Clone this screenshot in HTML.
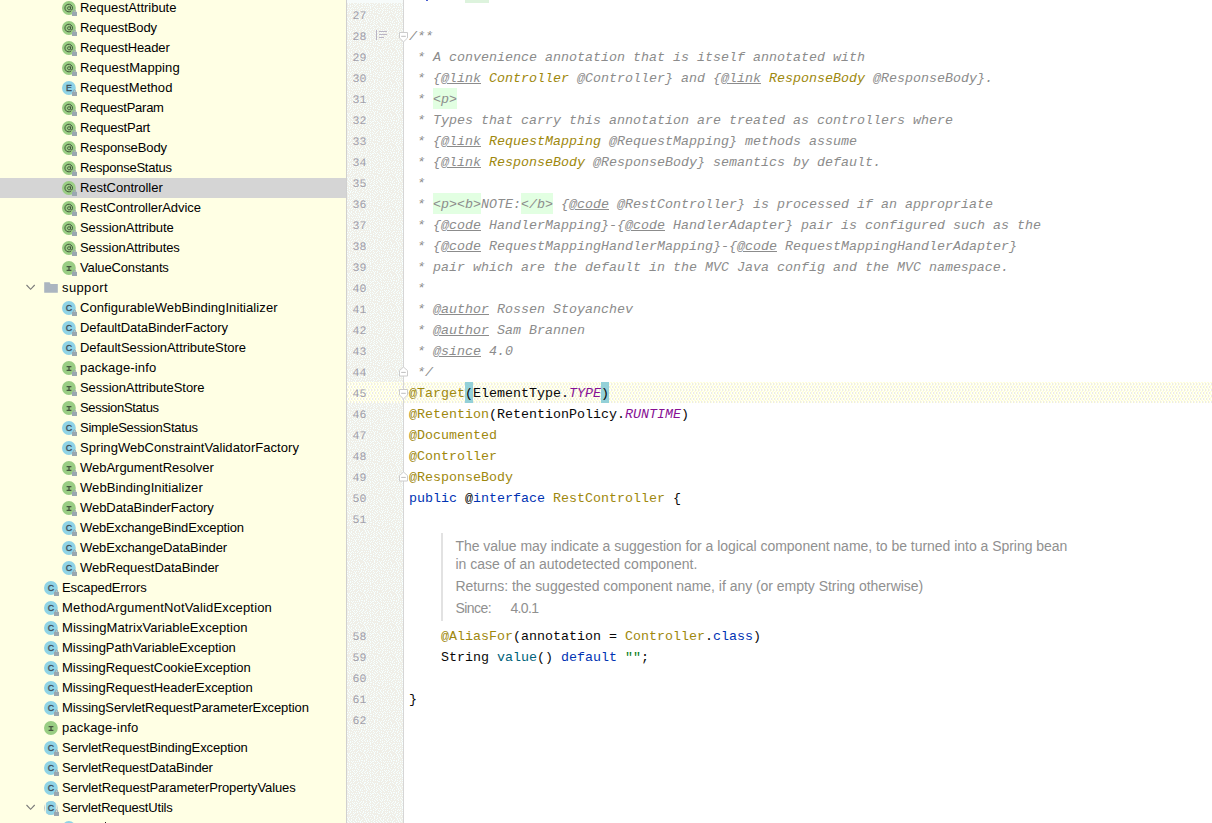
<!DOCTYPE html>
<html><head><meta charset="utf-8"><title>RestController</title>
<style>
html,body{margin:0;padding:0;}
body{width:1212px;height:823px;overflow:hidden;background:#fff;position:relative;font-family:"Liberation Sans",sans-serif;}
#tree{position:absolute;left:0;top:0;width:346px;height:823px;background:#FFFFE4;overflow:hidden;}
.row{position:absolute;left:0;width:346px;height:20px;line-height:20px;font-size:13px;color:#000;white-space:nowrap;}
.row.sel{background:#D5D5D5;}
.row .t{position:absolute;top:0;}
.ic{position:absolute;top:3px;width:16px;height:16px;}
#gut{position:absolute;left:346px;top:0;width:58px;height:823px;background:#F0EFE8;border-left:1px solid #D0D0D0;border-right:1px solid #D4D4D4;box-sizing:border-box;}
.ln{position:absolute;left:352.4px;font-family:"Liberation Mono",monospace;font-size:11.5px;text-rendering:geometricPrecision;letter-spacing:0.1px;line-height:21px;height:21px;color:#A1A0AB;}
#caret{position:absolute;left:347px;top:382px;width:865px;height:21px;background:#FCFAED;}
.cl{position:absolute;left:409px;height:21px;line-height:21px;font-family:"Liberation Mono",monospace;font-size:13.333px;white-space:pre;color:#080808;}
.c{color:#8C8C8C;font-style:italic;}
.u{text-decoration:underline;}
.g{color:#9E880D;}
.k{color:#0033B3;}
.p{color:#871094;font-style:italic;}
.m{color:#00627A;}
.s{color:#067D17;}
.h{position:absolute;height:21px;background:#E2FFE2;}
.b{position:absolute;height:21px;width:8px;background:#93D0D8;}
.doc{position:absolute;left:455px;font-size:14px;line-height:18px;height:18px;color:#909090;white-space:nowrap;}
#bar{position:absolute;left:441px;top:533px;width:2px;height:88px;background:#E2E2E2;}
.fold{position:absolute;left:398px;width:11px;height:12px;}
</style></head>
<body>
<div id="tree">
<div class="row" style="top:-2px"><svg class="ic" style="left:62px" viewBox="0 0 16 16"><circle cx="6.9" cy="7" r="6.9" fill="#99CD83"/><path d="M9.2 9.9 A3.8 3.8 0 1 1 10.5 7 V7.7 Q10.5 8.7 9.5 8.7 Q8.5 8.7 8.5 7.6 V5.4 M8.5 7 A1.5 1.5 0 1 1 8.49 6.95" fill="none" stroke="#42543B" stroke-width="1"/><rect x="10" y="10.8" width="5" height="4.2" fill="#9AA7B0"/><path d="M11.5 10.8 V9.8 a1 1 0 0 1 2 0 V10.8" fill="none" stroke="#9AA7B0" stroke-width="1"/></svg><span class="t" style="left:80px;letter-spacing:-0.028px">RequestAttribute</span></div>
<div class="row" style="top:18px"><svg class="ic" style="left:62px" viewBox="0 0 16 16"><circle cx="6.9" cy="7" r="6.9" fill="#99CD83"/><path d="M9.2 9.9 A3.8 3.8 0 1 1 10.5 7 V7.7 Q10.5 8.7 9.5 8.7 Q8.5 8.7 8.5 7.6 V5.4 M8.5 7 A1.5 1.5 0 1 1 8.49 6.95" fill="none" stroke="#42543B" stroke-width="1"/><rect x="10" y="10.8" width="5" height="4.2" fill="#9AA7B0"/><path d="M11.5 10.8 V9.8 a1 1 0 0 1 2 0 V10.8" fill="none" stroke="#9AA7B0" stroke-width="1"/></svg><span class="t" style="left:80px;letter-spacing:-0.097px">RequestBody</span></div>
<div class="row" style="top:38px"><svg class="ic" style="left:62px" viewBox="0 0 16 16"><circle cx="6.9" cy="7" r="6.9" fill="#99CD83"/><path d="M9.2 9.9 A3.8 3.8 0 1 1 10.5 7 V7.7 Q10.5 8.7 9.5 8.7 Q8.5 8.7 8.5 7.6 V5.4 M8.5 7 A1.5 1.5 0 1 1 8.49 6.95" fill="none" stroke="#42543B" stroke-width="1"/><rect x="10" y="10.8" width="5" height="4.2" fill="#9AA7B0"/><path d="M11.5 10.8 V9.8 a1 1 0 0 1 2 0 V10.8" fill="none" stroke="#9AA7B0" stroke-width="1"/></svg><span class="t" style="left:80px;letter-spacing:-0.105px">RequestHeader</span></div>
<div class="row" style="top:58px"><svg class="ic" style="left:62px" viewBox="0 0 16 16"><circle cx="6.9" cy="7" r="6.9" fill="#99CD83"/><path d="M9.2 9.9 A3.8 3.8 0 1 1 10.5 7 V7.7 Q10.5 8.7 9.5 8.7 Q8.5 8.7 8.5 7.6 V5.4 M8.5 7 A1.5 1.5 0 1 1 8.49 6.95" fill="none" stroke="#42543B" stroke-width="1"/><rect x="10" y="10.8" width="5" height="4.2" fill="#9AA7B0"/><path d="M11.5 10.8 V9.8 a1 1 0 0 1 2 0 V10.8" fill="none" stroke="#9AA7B0" stroke-width="1"/></svg><span class="t" style="left:80px;letter-spacing:0.107px">RequestMapping</span></div>
<div class="row" style="top:78px"><svg class="ic" style="left:62px" viewBox="0 0 16 16"><circle cx="6.9" cy="7" r="6.9" fill="#8FD3E6"/><text x="6.9" y="9.8" text-anchor="middle" font-family="Liberation Sans" font-size="8.8" fill="#3E5058" stroke="#3E5058" stroke-width="0.35">E</text><rect x="10" y="10.8" width="5" height="4.2" fill="#9AA7B0"/><path d="M11.5 10.8 V9.8 a1 1 0 0 1 2 0 V10.8" fill="none" stroke="#9AA7B0" stroke-width="1"/></svg><span class="t" style="left:80px;letter-spacing:0.048px">RequestMethod</span></div>
<div class="row" style="top:98px"><svg class="ic" style="left:62px" viewBox="0 0 16 16"><circle cx="6.9" cy="7" r="6.9" fill="#99CD83"/><path d="M9.2 9.9 A3.8 3.8 0 1 1 10.5 7 V7.7 Q10.5 8.7 9.5 8.7 Q8.5 8.7 8.5 7.6 V5.4 M8.5 7 A1.5 1.5 0 1 1 8.49 6.95" fill="none" stroke="#42543B" stroke-width="1"/><rect x="10" y="10.8" width="5" height="4.2" fill="#9AA7B0"/><path d="M11.5 10.8 V9.8 a1 1 0 0 1 2 0 V10.8" fill="none" stroke="#9AA7B0" stroke-width="1"/></svg><span class="t" style="left:80px;letter-spacing:-0.252px">RequestParam</span></div>
<div class="row" style="top:118px"><svg class="ic" style="left:62px" viewBox="0 0 16 16"><circle cx="6.9" cy="7" r="6.9" fill="#99CD83"/><path d="M9.2 9.9 A3.8 3.8 0 1 1 10.5 7 V7.7 Q10.5 8.7 9.5 8.7 Q8.5 8.7 8.5 7.6 V5.4 M8.5 7 A1.5 1.5 0 1 1 8.49 6.95" fill="none" stroke="#42543B" stroke-width="1"/><rect x="10" y="10.8" width="5" height="4.2" fill="#9AA7B0"/><path d="M11.5 10.8 V9.8 a1 1 0 0 1 2 0 V10.8" fill="none" stroke="#9AA7B0" stroke-width="1"/></svg><span class="t" style="left:80px;letter-spacing:-0.206px">RequestPart</span></div>
<div class="row" style="top:138px"><svg class="ic" style="left:62px" viewBox="0 0 16 16"><circle cx="6.9" cy="7" r="6.9" fill="#99CD83"/><path d="M9.2 9.9 A3.8 3.8 0 1 1 10.5 7 V7.7 Q10.5 8.7 9.5 8.7 Q8.5 8.7 8.5 7.6 V5.4 M8.5 7 A1.5 1.5 0 1 1 8.49 6.95" fill="none" stroke="#42543B" stroke-width="1"/><rect x="10" y="10.8" width="5" height="4.2" fill="#9AA7B0"/><path d="M11.5 10.8 V9.8 a1 1 0 0 1 2 0 V10.8" fill="none" stroke="#9AA7B0" stroke-width="1"/></svg><span class="t" style="left:80px;letter-spacing:-0.098px">ResponseBody</span></div>
<div class="row" style="top:158px"><svg class="ic" style="left:62px" viewBox="0 0 16 16"><circle cx="6.9" cy="7" r="6.9" fill="#99CD83"/><path d="M9.2 9.9 A3.8 3.8 0 1 1 10.5 7 V7.7 Q10.5 8.7 9.5 8.7 Q8.5 8.7 8.5 7.6 V5.4 M8.5 7 A1.5 1.5 0 1 1 8.49 6.95" fill="none" stroke="#42543B" stroke-width="1"/><rect x="10" y="10.8" width="5" height="4.2" fill="#9AA7B0"/><path d="M11.5 10.8 V9.8 a1 1 0 0 1 2 0 V10.8" fill="none" stroke="#9AA7B0" stroke-width="1"/></svg><span class="t" style="left:80px;letter-spacing:-0.265px">ResponseStatus</span></div>
<div class="row sel" style="top:178px"><svg class="ic" style="left:62px" viewBox="0 0 16 16"><circle cx="6.9" cy="7" r="6.9" fill="#99CD83"/><path d="M9.2 9.9 A3.8 3.8 0 1 1 10.5 7 V7.7 Q10.5 8.7 9.5 8.7 Q8.5 8.7 8.5 7.6 V5.4 M8.5 7 A1.5 1.5 0 1 1 8.49 6.95" fill="none" stroke="#42543B" stroke-width="1"/><rect x="10" y="10.8" width="5" height="4.2" fill="#9AA7B0"/><path d="M11.5 10.8 V9.8 a1 1 0 0 1 2 0 V10.8" fill="none" stroke="#9AA7B0" stroke-width="1"/></svg><span class="t" style="left:80px;letter-spacing:-0.028px">RestController</span></div>
<div class="row" style="top:198px"><svg class="ic" style="left:62px" viewBox="0 0 16 16"><circle cx="6.9" cy="7" r="6.9" fill="#99CD83"/><path d="M9.2 9.9 A3.8 3.8 0 1 1 10.5 7 V7.7 Q10.5 8.7 9.5 8.7 Q8.5 8.7 8.5 7.6 V5.4 M8.5 7 A1.5 1.5 0 1 1 8.49 6.95" fill="none" stroke="#42543B" stroke-width="1"/><rect x="10" y="10.8" width="5" height="4.2" fill="#9AA7B0"/><path d="M11.5 10.8 V9.8 a1 1 0 0 1 2 0 V10.8" fill="none" stroke="#9AA7B0" stroke-width="1"/></svg><span class="t" style="left:80px;letter-spacing:-0.065px">RestControllerAdvice</span></div>
<div class="row" style="top:218px"><svg class="ic" style="left:62px" viewBox="0 0 16 16"><circle cx="6.9" cy="7" r="6.9" fill="#99CD83"/><path d="M9.2 9.9 A3.8 3.8 0 1 1 10.5 7 V7.7 Q10.5 8.7 9.5 8.7 Q8.5 8.7 8.5 7.6 V5.4 M8.5 7 A1.5 1.5 0 1 1 8.49 6.95" fill="none" stroke="#42543B" stroke-width="1"/><rect x="10" y="10.8" width="5" height="4.2" fill="#9AA7B0"/><path d="M11.5 10.8 V9.8 a1 1 0 0 1 2 0 V10.8" fill="none" stroke="#9AA7B0" stroke-width="1"/></svg><span class="t" style="left:80px;letter-spacing:-0.061px">SessionAttribute</span></div>
<div class="row" style="top:238px"><svg class="ic" style="left:62px" viewBox="0 0 16 16"><circle cx="6.9" cy="7" r="6.9" fill="#99CD83"/><path d="M9.2 9.9 A3.8 3.8 0 1 1 10.5 7 V7.7 Q10.5 8.7 9.5 8.7 Q8.5 8.7 8.5 7.6 V5.4 M8.5 7 A1.5 1.5 0 1 1 8.49 6.95" fill="none" stroke="#42543B" stroke-width="1"/><rect x="10" y="10.8" width="5" height="4.2" fill="#9AA7B0"/><path d="M11.5 10.8 V9.8 a1 1 0 0 1 2 0 V10.8" fill="none" stroke="#9AA7B0" stroke-width="1"/></svg><span class="t" style="left:80px;letter-spacing:-0.081px">SessionAttributes</span></div>
<div class="row" style="top:258px"><svg class="ic" style="left:62px" viewBox="0 0 16 16"><circle cx="6.9" cy="7" r="6.9" fill="#99CD83"/><path d="M4.6 5.7 H9.4 M4.6 9.4 H9.4 M7 5.7 V9.4" stroke="#45543F" stroke-width="1.3" fill="none"/><rect x="10" y="10.8" width="5" height="4.2" fill="#9AA7B0"/><path d="M11.5 10.8 V9.8 a1 1 0 0 1 2 0 V10.8" fill="none" stroke="#9AA7B0" stroke-width="1"/></svg><span class="t" style="left:80px;letter-spacing:-0.152px">ValueConstants</span></div>
<div class="row" style="top:278px"><svg class="ic" style="left:26px" viewBox="0 0 16 16"><path d="M0.5 4 L4.6 8.3 L8.7 4" fill="none" stroke="#7A7A7A" stroke-width="1.1"/></svg><svg class="ic" style="left:44px" viewBox="0 0 16 16"><path d="M0.2 1.3 H5.6 L6.6 3 H13.8 V11.8 H0.2 Z" fill="#ABB5C0"/></svg><span class="t" style="left:62px;letter-spacing:0.375px">support</span></div>
<div class="row" style="top:298px"><svg class="ic" style="left:62px" viewBox="0 0 16 16"><circle cx="6.9" cy="7" r="6.9" fill="#8FD3E6"/><text x="6.9" y="9.8" text-anchor="middle" font-family="Liberation Sans" font-size="8.8" fill="#3E5058" stroke="#3E5058" stroke-width="0.35">C</text><rect x="10" y="10.8" width="5" height="4.2" fill="#9AA7B0"/><path d="M11.5 10.8 V9.8 a1 1 0 0 1 2 0 V10.8" fill="none" stroke="#9AA7B0" stroke-width="1"/></svg><span class="t" style="left:80px;letter-spacing:0.083px">ConfigurableWebBindingInitializer</span></div>
<div class="row" style="top:318px"><svg class="ic" style="left:62px" viewBox="0 0 16 16"><circle cx="6.9" cy="7" r="6.9" fill="#8FD3E6"/><text x="6.9" y="9.8" text-anchor="middle" font-family="Liberation Sans" font-size="8.8" fill="#3E5058" stroke="#3E5058" stroke-width="0.35">C</text><rect x="10" y="10.8" width="5" height="4.2" fill="#9AA7B0"/><path d="M11.5 10.8 V9.8 a1 1 0 0 1 2 0 V10.8" fill="none" stroke="#9AA7B0" stroke-width="1"/></svg><span class="t" style="left:80px;letter-spacing:-0.070px">DefaultDataBinderFactory</span></div>
<div class="row" style="top:338px"><svg class="ic" style="left:62px" viewBox="0 0 16 16"><circle cx="6.9" cy="7" r="6.9" fill="#8FD3E6"/><text x="6.9" y="9.8" text-anchor="middle" font-family="Liberation Sans" font-size="8.8" fill="#3E5058" stroke="#3E5058" stroke-width="0.35">C</text><rect x="10" y="10.8" width="5" height="4.2" fill="#9AA7B0"/><path d="M11.5 10.8 V9.8 a1 1 0 0 1 2 0 V10.8" fill="none" stroke="#9AA7B0" stroke-width="1"/></svg><span class="t" style="left:80px;letter-spacing:-0.037px">DefaultSessionAttributeStore</span></div>
<div class="row" style="top:358px"><svg class="ic" style="left:62px" viewBox="0 0 16 16"><circle cx="6.9" cy="7" r="6.9" fill="#99CD83"/><path d="M4.6 5.7 H9.4 M4.6 9.4 H9.4 M7 5.7 V9.4" stroke="#45543F" stroke-width="1.3" fill="none"/><rect x="10" y="10.8" width="5" height="4.2" fill="#9AA7B0"/><path d="M11.5 10.8 V9.8 a1 1 0 0 1 2 0 V10.8" fill="none" stroke="#9AA7B0" stroke-width="1"/></svg><span class="t" style="left:80px;letter-spacing:0.162px">package-info</span></div>
<div class="row" style="top:378px"><svg class="ic" style="left:62px" viewBox="0 0 16 16"><circle cx="6.9" cy="7" r="6.9" fill="#99CD83"/><path d="M4.6 5.7 H9.4 M4.6 9.4 H9.4 M7 5.7 V9.4" stroke="#45543F" stroke-width="1.3" fill="none"/><rect x="10" y="10.8" width="5" height="4.2" fill="#9AA7B0"/><path d="M11.5 10.8 V9.8 a1 1 0 0 1 2 0 V10.8" fill="none" stroke="#9AA7B0" stroke-width="1"/></svg><span class="t" style="left:80px;letter-spacing:-0.059px">SessionAttributeStore</span></div>
<div class="row" style="top:398px"><svg class="ic" style="left:62px" viewBox="0 0 16 16"><circle cx="6.9" cy="7" r="6.9" fill="#99CD83"/><path d="M4.6 5.7 H9.4 M4.6 9.4 H9.4 M7 5.7 V9.4" stroke="#45543F" stroke-width="1.3" fill="none"/><rect x="10" y="10.8" width="5" height="4.2" fill="#9AA7B0"/><path d="M11.5 10.8 V9.8 a1 1 0 0 1 2 0 V10.8" fill="none" stroke="#9AA7B0" stroke-width="1"/></svg><span class="t" style="left:80px;letter-spacing:-0.339px">SessionStatus</span></div>
<div class="row" style="top:418px"><svg class="ic" style="left:62px" viewBox="0 0 16 16"><circle cx="6.9" cy="7" r="6.9" fill="#8FD3E6"/><text x="6.9" y="9.8" text-anchor="middle" font-family="Liberation Sans" font-size="8.8" fill="#3E5058" stroke="#3E5058" stroke-width="0.35">C</text><rect x="10" y="10.8" width="5" height="4.2" fill="#9AA7B0"/><path d="M11.5 10.8 V9.8 a1 1 0 0 1 2 0 V10.8" fill="none" stroke="#9AA7B0" stroke-width="1"/></svg><span class="t" style="left:80px;letter-spacing:-0.265px">SimpleSessionStatus</span></div>
<div class="row" style="top:438px"><svg class="ic" style="left:62px" viewBox="0 0 16 16"><circle cx="6.9" cy="7" r="6.9" fill="#8FD3E6"/><text x="6.9" y="9.8" text-anchor="middle" font-family="Liberation Sans" font-size="8.8" fill="#3E5058" stroke="#3E5058" stroke-width="0.35">C</text><rect x="10" y="10.8" width="5" height="4.2" fill="#9AA7B0"/><path d="M11.5 10.8 V9.8 a1 1 0 0 1 2 0 V10.8" fill="none" stroke="#9AA7B0" stroke-width="1"/></svg><span class="t" style="left:80px;letter-spacing:0.057px">SpringWebConstraintValidatorFactory</span></div>
<div class="row" style="top:458px"><svg class="ic" style="left:62px" viewBox="0 0 16 16"><circle cx="6.9" cy="7" r="6.9" fill="#99CD83"/><path d="M4.6 5.7 H9.4 M4.6 9.4 H9.4 M7 5.7 V9.4" stroke="#45543F" stroke-width="1.3" fill="none"/><rect x="10" y="10.8" width="5" height="4.2" fill="#9AA7B0"/><path d="M11.5 10.8 V9.8 a1 1 0 0 1 2 0 V10.8" fill="none" stroke="#9AA7B0" stroke-width="1"/></svg><span class="t" style="left:80px;letter-spacing:-0.019px">WebArgumentResolver</span></div>
<div class="row" style="top:478px"><svg class="ic" style="left:62px" viewBox="0 0 16 16"><circle cx="6.9" cy="7" r="6.9" fill="#99CD83"/><path d="M4.6 5.7 H9.4 M4.6 9.4 H9.4 M7 5.7 V9.4" stroke="#45543F" stroke-width="1.3" fill="none"/><rect x="10" y="10.8" width="5" height="4.2" fill="#9AA7B0"/><path d="M11.5 10.8 V9.8 a1 1 0 0 1 2 0 V10.8" fill="none" stroke="#9AA7B0" stroke-width="1"/></svg><span class="t" style="left:80px;letter-spacing:0.078px">WebBindingInitializer</span></div>
<div class="row" style="top:498px"><svg class="ic" style="left:62px" viewBox="0 0 16 16"><circle cx="6.9" cy="7" r="6.9" fill="#99CD83"/><path d="M4.6 5.7 H9.4 M4.6 9.4 H9.4 M7 5.7 V9.4" stroke="#45543F" stroke-width="1.3" fill="none"/><rect x="10" y="10.8" width="5" height="4.2" fill="#9AA7B0"/><path d="M11.5 10.8 V9.8 a1 1 0 0 1 2 0 V10.8" fill="none" stroke="#9AA7B0" stroke-width="1"/></svg><span class="t" style="left:80px;letter-spacing:-0.054px">WebDataBinderFactory</span></div>
<div class="row" style="top:518px"><svg class="ic" style="left:62px" viewBox="0 0 16 16"><circle cx="6.9" cy="7" r="6.9" fill="#8FD3E6"/><text x="6.9" y="9.8" text-anchor="middle" font-family="Liberation Sans" font-size="8.8" fill="#3E5058" stroke="#3E5058" stroke-width="0.35">C</text><rect x="10" y="10.8" width="5" height="4.2" fill="#9AA7B0"/><path d="M11.5 10.8 V9.8 a1 1 0 0 1 2 0 V10.8" fill="none" stroke="#9AA7B0" stroke-width="1"/></svg><span class="t" style="left:80px;letter-spacing:-0.147px">WebExchangeBindException</span></div>
<div class="row" style="top:538px"><svg class="ic" style="left:62px" viewBox="0 0 16 16"><circle cx="6.9" cy="7" r="6.9" fill="#8FD3E6"/><text x="6.9" y="9.8" text-anchor="middle" font-family="Liberation Sans" font-size="8.8" fill="#3E5058" stroke="#3E5058" stroke-width="0.35">C</text><rect x="10" y="10.8" width="5" height="4.2" fill="#9AA7B0"/><path d="M11.5 10.8 V9.8 a1 1 0 0 1 2 0 V10.8" fill="none" stroke="#9AA7B0" stroke-width="1"/></svg><span class="t" style="left:80px;letter-spacing:-0.112px">WebExchangeDataBinder</span></div>
<div class="row" style="top:558px"><svg class="ic" style="left:62px" viewBox="0 0 16 16"><circle cx="6.9" cy="7" r="6.9" fill="#8FD3E6"/><text x="6.9" y="9.8" text-anchor="middle" font-family="Liberation Sans" font-size="8.8" fill="#3E5058" stroke="#3E5058" stroke-width="0.35">C</text><rect x="10" y="10.8" width="5" height="4.2" fill="#9AA7B0"/><path d="M11.5 10.8 V9.8 a1 1 0 0 1 2 0 V10.8" fill="none" stroke="#9AA7B0" stroke-width="1"/></svg><span class="t" style="left:80px;letter-spacing:-0.053px">WebRequestDataBinder</span></div>
<div class="row" style="top:578px"><svg class="ic" style="left:44px" viewBox="0 0 16 16"><circle cx="6.9" cy="7" r="6.9" fill="#8FD3E6"/><text x="6.9" y="9.8" text-anchor="middle" font-family="Liberation Sans" font-size="8.8" fill="#3E5058" stroke="#3E5058" stroke-width="0.35">C</text><rect x="10" y="10.8" width="5" height="4.2" fill="#9AA7B0"/><path d="M11.5 10.8 V9.8 a1 1 0 0 1 2 0 V10.8" fill="none" stroke="#9AA7B0" stroke-width="1"/></svg><span class="t" style="left:62px;letter-spacing:-0.106px">EscapedErrors</span></div>
<div class="row" style="top:598px"><svg class="ic" style="left:44px" viewBox="0 0 16 16"><circle cx="6.9" cy="7" r="6.9" fill="#8FD3E6"/><text x="6.9" y="9.8" text-anchor="middle" font-family="Liberation Sans" font-size="8.8" fill="#3E5058" stroke="#3E5058" stroke-width="0.35">C</text><rect x="10" y="10.8" width="5" height="4.2" fill="#9AA7B0"/><path d="M11.5 10.8 V9.8 a1 1 0 0 1 2 0 V10.8" fill="none" stroke="#9AA7B0" stroke-width="1"/></svg><span class="t" style="left:62px;letter-spacing:0.161px">MethodArgumentNotValidException</span></div>
<div class="row" style="top:618px"><svg class="ic" style="left:44px" viewBox="0 0 16 16"><circle cx="6.9" cy="7" r="6.9" fill="#8FD3E6"/><text x="6.9" y="9.8" text-anchor="middle" font-family="Liberation Sans" font-size="8.8" fill="#3E5058" stroke="#3E5058" stroke-width="0.35">C</text><rect x="10" y="10.8" width="5" height="4.2" fill="#9AA7B0"/><path d="M11.5 10.8 V9.8 a1 1 0 0 1 2 0 V10.8" fill="none" stroke="#9AA7B0" stroke-width="1"/></svg><span class="t" style="left:62px;letter-spacing:0.077px">MissingMatrixVariableException</span></div>
<div class="row" style="top:638px"><svg class="ic" style="left:44px" viewBox="0 0 16 16"><circle cx="6.9" cy="7" r="6.9" fill="#8FD3E6"/><text x="6.9" y="9.8" text-anchor="middle" font-family="Liberation Sans" font-size="8.8" fill="#3E5058" stroke="#3E5058" stroke-width="0.35">C</text><rect x="10" y="10.8" width="5" height="4.2" fill="#9AA7B0"/><path d="M11.5 10.8 V9.8 a1 1 0 0 1 2 0 V10.8" fill="none" stroke="#9AA7B0" stroke-width="1"/></svg><span class="t" style="left:62px;letter-spacing:-0.030px">MissingPathVariableException</span></div>
<div class="row" style="top:658px"><svg class="ic" style="left:44px" viewBox="0 0 16 16"><circle cx="6.9" cy="7" r="6.9" fill="#8FD3E6"/><text x="6.9" y="9.8" text-anchor="middle" font-family="Liberation Sans" font-size="8.8" fill="#3E5058" stroke="#3E5058" stroke-width="0.35">C</text><rect x="10" y="10.8" width="5" height="4.2" fill="#9AA7B0"/><path d="M11.5 10.8 V9.8 a1 1 0 0 1 2 0 V10.8" fill="none" stroke="#9AA7B0" stroke-width="1"/></svg><span class="t" style="left:62px;letter-spacing:-0.046px">MissingRequestCookieException</span></div>
<div class="row" style="top:678px"><svg class="ic" style="left:44px" viewBox="0 0 16 16"><circle cx="6.9" cy="7" r="6.9" fill="#8FD3E6"/><text x="6.9" y="9.8" text-anchor="middle" font-family="Liberation Sans" font-size="8.8" fill="#3E5058" stroke="#3E5058" stroke-width="0.35">C</text><rect x="10" y="10.8" width="5" height="4.2" fill="#9AA7B0"/><path d="M11.5 10.8 V9.8 a1 1 0 0 1 2 0 V10.8" fill="none" stroke="#9AA7B0" stroke-width="1"/></svg><span class="t" style="left:62px;letter-spacing:-0.052px">MissingRequestHeaderException</span></div>
<div class="row" style="top:698px"><svg class="ic" style="left:44px" viewBox="0 0 16 16"><circle cx="6.9" cy="7" r="6.9" fill="#8FD3E6"/><text x="6.9" y="9.8" text-anchor="middle" font-family="Liberation Sans" font-size="8.8" fill="#3E5058" stroke="#3E5058" stroke-width="0.35">C</text><rect x="10" y="10.8" width="5" height="4.2" fill="#9AA7B0"/><path d="M11.5 10.8 V9.8 a1 1 0 0 1 2 0 V10.8" fill="none" stroke="#9AA7B0" stroke-width="1"/></svg><span class="t" style="left:62px;letter-spacing:-0.101px">MissingServletRequestParameterException</span></div>
<div class="row" style="top:718px"><svg class="ic" style="left:44px" viewBox="0 0 16 16"><circle cx="6.9" cy="7" r="6.9" fill="#99CD83"/><path d="M4.6 5.7 H9.4 M4.6 9.4 H9.4 M7 5.7 V9.4" stroke="#45543F" stroke-width="1.3" fill="none"/></svg><span class="t" style="left:62px;letter-spacing:0.171px">package-info</span></div>
<div class="row" style="top:738px"><svg class="ic" style="left:44px" viewBox="0 0 16 16"><circle cx="6.9" cy="7" r="6.9" fill="#8FD3E6"/><text x="6.9" y="9.8" text-anchor="middle" font-family="Liberation Sans" font-size="8.8" fill="#3E5058" stroke="#3E5058" stroke-width="0.35">C</text><rect x="10" y="10.8" width="5" height="4.2" fill="#9AA7B0"/><path d="M11.5 10.8 V9.8 a1 1 0 0 1 2 0 V10.8" fill="none" stroke="#9AA7B0" stroke-width="1"/></svg><span class="t" style="left:62px;letter-spacing:-0.125px">ServletRequestBindingException</span></div>
<div class="row" style="top:758px"><svg class="ic" style="left:44px" viewBox="0 0 16 16"><circle cx="6.9" cy="7" r="6.9" fill="#8FD3E6"/><text x="6.9" y="9.8" text-anchor="middle" font-family="Liberation Sans" font-size="8.8" fill="#3E5058" stroke="#3E5058" stroke-width="0.35">C</text><rect x="10" y="10.8" width="5" height="4.2" fill="#9AA7B0"/><path d="M11.5 10.8 V9.8 a1 1 0 0 1 2 0 V10.8" fill="none" stroke="#9AA7B0" stroke-width="1"/></svg><span class="t" style="left:62px;letter-spacing:-0.130px">ServletRequestDataBinder</span></div>
<div class="row" style="top:778px"><svg class="ic" style="left:44px" viewBox="0 0 16 16"><circle cx="6.9" cy="7" r="6.9" fill="#8FD3E6"/><text x="6.9" y="9.8" text-anchor="middle" font-family="Liberation Sans" font-size="8.8" fill="#3E5058" stroke="#3E5058" stroke-width="0.35">C</text><rect x="10" y="10.8" width="5" height="4.2" fill="#9AA7B0"/><path d="M11.5 10.8 V9.8 a1 1 0 0 1 2 0 V10.8" fill="none" stroke="#9AA7B0" stroke-width="1"/></svg><span class="t" style="left:62px;letter-spacing:-0.105px">ServletRequestParameterPropertyValues</span></div>
<div class="row" style="top:798px"><svg class="ic" style="left:26px" viewBox="0 0 16 16"><path d="M0.5 4 L4.6 8.3 L8.7 4" fill="none" stroke="#7A7A7A" stroke-width="1.1"/></svg><svg class="ic" style="left:44px" viewBox="0 0 16 16"><circle cx="6.9" cy="7" r="6.9" fill="#B7C6CB"/><rect x="1.2" y="0" width="1" height="14" fill="#FFFFE4"/><rect x="11.6" y="0" width="1" height="14" fill="#FFFFE4"/><path d="M2.2 1.9 A6.9 6.9 0 0 1 11.6 1.9 V12.1 A6.9 6.9 0 0 1 2.2 12.1 Z" fill="#8FD3E6"/><text x="6.9" y="9.8" text-anchor="middle" font-family="Liberation Sans" font-size="8.8" fill="#3E5058" stroke="#3E5058" stroke-width="0.35">C</text><rect x="10" y="10.8" width="5" height="4.2" fill="#9AA7B0"/><path d="M11.5 10.8 V9.8 a1 1 0 0 1 2 0 V10.8" fill="none" stroke="#9AA7B0" stroke-width="1"/></svg><span class="t" style="left:62px;letter-spacing:-0.187px">ServletRequestUtils</span></div>
<div class="row" style="top:818px"><svg class="ic" style="left:62px" viewBox="0 0 16 16"><circle cx="6.9" cy="7" r="6.9" fill="#8FD3E6"/><text x="6.9" y="9.8" text-anchor="middle" font-family="Liberation Sans" font-size="8.8" fill="#3E5058" stroke="#3E5058" stroke-width="0.35">C</text><rect x="10" y="10.8" width="5" height="4.2" fill="#9AA7B0"/><path d="M11.5 10.8 V9.8 a1 1 0 0 1 2 0 V10.8" fill="none" stroke="#9AA7B0" stroke-width="1"/></svg></div>
</div>
<div id="gut"></div>
<svg style="position:absolute;left:347px;top:0;width:56px;height:823px" width="56" height="823"><defs><pattern id="dz" width="32" height="32" patternUnits="userSpaceOnUse"><path d="M1 0.5h1M3 0.5h1M5 0.5h1M8 0.5h1M10 0.5h1M19 0.5h1M22 0.5h1M27 0.5h1M30 0.5h1M28 1.5h1M25 1.5h1M23 1.5h1M16 1.5h1M14 1.5h1M11 1.5h1M2 1.5h1M5 2.5h1M7 2.5h1M9 2.5h1M13 2.5h1M16 2.5h1M19 2.5h1M23 2.5h1M26 2.5h1M31 2.5h1M30 3.5h1M27 3.5h1M22 3.5h1M18 3.5h1M15 3.5h1M12 3.5h1M10 3.5h1M6 3.5h1M3 3.5h1M1 3.5h1M1 4.5h1M7 4.5h1M9 4.5h1M14 4.5h1M17 4.5h1M20 4.5h1M23 4.5h1M25 4.5h1M29 4.5h1M28 5.5h1M26 5.5h1M22 5.5h1M20 5.5h1M18 5.5h1M15 5.5h1M12 5.5h1M8 5.5h1M5 5.5h1M3 5.5h1M1 6.5h1M3 6.5h1M7 6.5h1M10 6.5h1M23 6.5h1M25 6.5h1M30 6.5h1M27 7.5h1M23 7.5h1M21 7.5h1M19 7.5h1M17 7.5h1M15 7.5h1M14 7.5h1M11 7.5h1M5 7.5h1M0 8.5h1M2 8.5h1M4 8.5h1M6 8.5h1M8 8.5h1M10 8.5h1M13 8.5h1M23 8.5h1M28 8.5h1M30 8.5h1M29 9.5h1M26 9.5h1M21 9.5h1M19 9.5h1M16 9.5h1M12 9.5h1M3 9.5h1M1 10.5h1M4 10.5h1M6 10.5h1M8 10.5h1M14 10.5h1M18 10.5h1M20 10.5h1M23 10.5h1M24 10.5h1M28 10.5h1M31 10.5h1M26 11.5h1M16 11.5h1M12 11.5h1M10 11.5h1M3 11.5h1M0 11.5h1M3 12.5h1M6 12.5h1M8 12.5h1M10 12.5h1M13 12.5h1M16 12.5h1M18 12.5h1M21 12.5h1M23 12.5h1M26 12.5h1M28 12.5h1M30 12.5h1M31 13.5h1M20 13.5h1M15 13.5h1M7 13.5h1M2 13.5h1M0 13.5h1M4 14.5h1M6 14.5h1M11 14.5h1M13 14.5h1M17 14.5h1M18 14.5h1M21 14.5h1M23 14.5h1M25 14.5h1M30 15.5h1M28 15.5h1M26 15.5h1M20 15.5h1M17 15.5h1M14 15.5h1M10 15.5h1M3 15.5h1M5 16.5h1M7 16.5h1M9 16.5h1M16 16.5h1M19 16.5h1M22 16.5h1M24 16.5h1M27 16.5h1M30 16.5h1M27 17.5h1M17 17.5h1M11 17.5h1M4 17.5h1M2 17.5h1M0 17.5h1M1 18.5h1M6 18.5h1M9 18.5h1M12 18.5h1M18 18.5h1M20 18.5h1M23 18.5h1M27 18.5h1M30 18.5h1M29 19.5h1M25 19.5h1M21 19.5h1M18 19.5h1M15 19.5h1M12 19.5h1M8 19.5h1M4 19.5h1M1 19.5h1M2 20.5h1M4 20.5h1M8 20.5h1M14 20.5h1M19 20.5h1M21 20.5h1M24 20.5h1M27 20.5h1M31 20.5h1M29 21.5h1M26 21.5h1M22 21.5h1M19 21.5h1M17 21.5h1M13 21.5h1M11 21.5h1M9 21.5h1M6 21.5h1M3 21.5h1M0 21.5h1M1 22.5h1M4 22.5h1M7 22.5h1M13 22.5h1M15 22.5h1M20 22.5h1M24 22.5h1M27 22.5h1M30 22.5h1M29 23.5h1M26 23.5h1M23 23.5h1M19 23.5h1M11 23.5h1M9 23.5h1M5 23.5h1M2 23.5h1M1 24.5h1M12 24.5h1M14 24.5h1M15 24.5h1M17 24.5h1M19 24.5h1M27 24.5h1M30 25.5h1M28 25.5h1M26 25.5h1M25 25.5h1M23 25.5h1M21 25.5h1M17 25.5h1M12 25.5h1M10 25.5h1M8 25.5h1M6 25.5h1M4 25.5h1M2 25.5h1M5 26.5h1M14 26.5h1M19 26.5h1M24 26.5h1M31 26.5h1M30 27.5h1M26 27.5h1M23 27.5h1M21 27.5h1M18 27.5h1M16 27.5h1M14 27.5h1M11 27.5h1M9 27.5h1M7 27.5h1M2 27.5h1M0 27.5h1M2 28.5h1M4 28.5h1M8 28.5h1M13 28.5h1M18 28.5h1M27 28.5h1M29 28.5h1M26 29.5h1M24 29.5h1M22 29.5h1M20 29.5h1M15 29.5h1M12 29.5h1M8 29.5h1M6 29.5h1M0 29.5h1M2 30.5h1M4 30.5h1M9 30.5h1M16 30.5h1M19 30.5h1M23 30.5h1M28 30.5h1M30 30.5h1M29 31.5h1M25 31.5h1M21 31.5h1M18 31.5h1M15 31.5h1M12 31.5h1M8 31.5h1M6 31.5h1M3 31.5h1M0 31.5h1" stroke="#F6FFFF" stroke-width="1" shape-rendering="crispEdges"/></pattern></defs><rect width="56" height="823" fill="url(#dz)"/></svg>
<div id="caret"></div><svg style="position:absolute;left:347px;top:382px;width:865px;height:21px" width="865" height="21"><defs><pattern id="cz" width="3" height="6" patternUnits="userSpaceOnUse"><rect width="3" height="6" fill="#FFFFDC"/><path d="M1 0.5h1M2 1.5h1M2 2.5h1M1 3.5h1M0 4.5h1M0 5.5h1" stroke="#FFFFFF" stroke-width="1" shape-rendering="crispEdges"/><path d="M0 1.5h1M0 2.5h1M1 4.5h1M1 5.5h1" stroke="#ECECE6" stroke-width="1" shape-rendering="crispEdges"/></pattern></defs><rect width="865" height="21" fill="url(#cz)"/></svg>
<div style="position:absolute;left:403px;top:0;width:1px;height:823px;background:#D6D6D6"></div>
<div class="ln" style="top:6px">27</div><div class="ln" style="top:27px">28</div><div class="ln" style="top:48px">29</div><div class="ln" style="top:69px">30</div><div class="ln" style="top:90px">31</div><div class="ln" style="top:111px">32</div><div class="ln" style="top:132px">33</div><div class="ln" style="top:153px">34</div><div class="ln" style="top:174px">35</div><div class="ln" style="top:195px">36</div><div class="ln" style="top:216px">37</div><div class="ln" style="top:237px">38</div><div class="ln" style="top:258px">39</div><div class="ln" style="top:279px">40</div><div class="ln" style="top:300px">41</div><div class="ln" style="top:321px">42</div><div class="ln" style="top:342px">43</div><div class="ln" style="top:363px">44</div><div class="ln" style="top:384px">45</div><div class="ln" style="top:405px">46</div><div class="ln" style="top:426px">47</div><div class="ln" style="top:447px">48</div><div class="ln" style="top:468px">49</div><div class="ln" style="top:489px">50</div><div class="ln" style="top:510px">51</div><div class="ln" style="top:627px">58</div><div class="ln" style="top:648px">59</div><div class="ln" style="top:669px">60</div><div class="ln" style="top:690px">61</div><div class="ln" style="top:711px">62</div>
<div class="h" style="left:433px;top:88px;width:24px"></div><div class="h" style="left:433px;top:193px;width:48px"></div><div class="h" style="left:521px;top:193px;width:32px"></div><div class="b" style="left:465px;top:382px"></div><div class="b" style="left:601px;top:382px"></div>
<div class="cl" style="top:26px"><span class="c">/**</span></div>
<div class="cl" style="top:47px"><span class="c"> * A convenience annotation that is itself annotated with</span></div>
<div class="cl" style="top:68px"><span class="c"> * {<span class="u">@link</span> <span class="g">Controller</span> @Controller} and {<span class="u">@link</span> <span class="g">ResponseBody</span> @ResponseBody}.</span></div>
<div class="cl" style="top:89px"><span class="c"> * &lt;p&gt;</span></div>
<div class="cl" style="top:110px"><span class="c"> * Types that carry this annotation are treated as controllers where</span></div>
<div class="cl" style="top:131px"><span class="c"> * {<span class="u">@link</span> <span class="g">RequestMapping</span> @RequestMapping} methods assume</span></div>
<div class="cl" style="top:152px"><span class="c"> * {<span class="u">@link</span> <span class="g">ResponseBody</span> @ResponseBody} semantics by default.</span></div>
<div class="cl" style="top:173px"><span class="c"> *</span></div>
<div class="cl" style="top:194px"><span class="c"> * &lt;p&gt;&lt;b&gt;NOTE:&lt;/b&gt; {<span class="u">@code</span> @RestController} is processed if an appropriate</span></div>
<div class="cl" style="top:215px"><span class="c"> * {<span class="u">@code</span> HandlerMapping}-{<span class="u">@code</span> HandlerAdapter} pair is configured such as the</span></div>
<div class="cl" style="top:236px"><span class="c"> * {<span class="u">@code</span> RequestMappingHandlerMapping}-{<span class="u">@code</span> RequestMappingHandlerAdapter}</span></div>
<div class="cl" style="top:257px"><span class="c"> * pair which are the default in the MVC Java config and the MVC namespace.</span></div>
<div class="cl" style="top:278px"><span class="c"> *</span></div>
<div class="cl" style="top:299px"><span class="c"> * <span class="u">@author</span> Rossen Stoyanchev</span></div>
<div class="cl" style="top:320px"><span class="c"> * <span class="u">@author</span> Sam Brannen</span></div>
<div class="cl" style="top:341px"><span class="c"> * <span class="u">@since</span> 4.0</span></div>
<div class="cl" style="top:362px"><span class="c"> */</span></div>
<div class="cl" style="top:383px"><span class="g">@Target</span>(ElementType.<span class="p">TYPE</span>)</div>
<div class="cl" style="top:404px"><span class="g">@Retention</span>(RetentionPolicy.<span class="p">RUNTIME</span>)</div>
<div class="cl" style="top:425px"><span class="g">@Documented</span></div>
<div class="cl" style="top:446px"><span class="g">@Controller</span></div>
<div class="cl" style="top:467px"><span class="g">@ResponseBody</span></div>
<div class="cl" style="top:488px"><span class="k">public</span> @<span class="k">interface</span> <span class="g">RestController</span> {</div>
<div class="cl" style="top:626px">    <span class="g">@AliasFor</span>(annotation = <span class="g">Controller</span>.<span class="k">class</span>)</div>
<div class="cl" style="top:647px">    String <span class="m">value</span>() <span class="k">default</span> <span class="s">""</span>;</div>
<div class="cl" style="top:689px">}</div>
<div id="bar"></div>
<div class="doc" style="top:537px;left:455.4px;letter-spacing:-0.03px">The value may indicate a suggestion for a logical component name, to be turned into a Spring bean</div>
<div class="doc" style="top:555px;left:455.4px;letter-spacing:0.02px">in case of an autodetected component.</div>
<div class="doc" style="top:577px;left:455.4px;letter-spacing:-0.03px">Returns: the suggested component name, if any (or empty String otherwise)</div>
<div class="doc" style="top:599px;left:455.4px;letter-spacing:-0.55px">Since:</div>
<div class="doc" style="top:599px;left:510.4px;letter-spacing:-0.60px">4.0.1</div>
<svg class="fold" style="top:31px" viewBox="0 0 11 12"><path d="M1.5 1.5 H9.5 V7 L5.5 10.9 L1.5 7 Z" fill="#fff" stroke="#CCCCCC" stroke-width="1"/><path d="M3.2 5.3 H7.8" stroke="#BDBDBD" stroke-width="1"/></svg>
<svg class="fold" style="top:366px" viewBox="0 0 11 12"><path d="M1.5 10 V4.6 L5.5 1 L9.5 4.6 V10 Z" fill="#fff" stroke="#CCCCCC" stroke-width="1"/><path d="M3.2 6.4 H7.8" stroke="#BDBDBD" stroke-width="1"/></svg>
<svg class="fold" style="top:388px" viewBox="0 0 11 12"><path d="M1.5 1.5 H9.5 V7 L5.5 10.9 L1.5 7 Z" fill="#fff" stroke="#CCCCCC" stroke-width="1"/><path d="M3.2 5.3 H7.8" stroke="#BDBDBD" stroke-width="1"/></svg>
<svg class="fold" style="top:471px" viewBox="0 0 11 12"><path d="M1.5 10 V4.6 L5.5 1 L9.5 4.6 V10 Z" fill="#fff" stroke="#CCCCCC" stroke-width="1"/><path d="M3.2 6.4 H7.8" stroke="#BDBDBD" stroke-width="1"/></svg>
<svg style="position:absolute;left:376px;top:30px;width:12px;height:11px" viewBox="0 0 12 11"><path d="M0.5 0 V10 M3 1.5 H11 M3 4.5 H11 M3 7.5 H8" stroke="#BAB5C4" stroke-width="1" fill="none"/></svg>
<div style="position:absolute;left:347px;top:0;width:56px;height:3px;background:#F7FBFA"></div><div style="position:absolute;left:465px;top:0;width:24px;height:3px;background:#DDF3DD"></div><div style="position:absolute;left:426px;top:0;width:2px;height:1px;background:#4A5FD0"></div>
<div style="position:absolute;left:105px;top:822px;width:1px;height:1px;background:#222"></div>
</body></html>
